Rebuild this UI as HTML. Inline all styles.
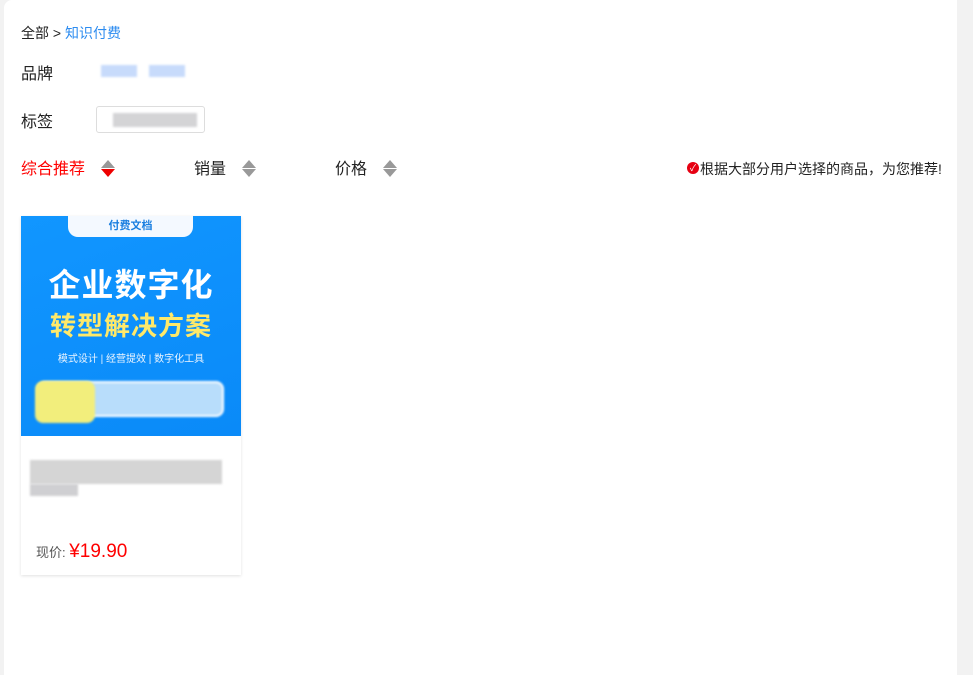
<!DOCTYPE html>
<html><head><meta charset="utf-8"><style>
*{margin:0;padding:0;box-sizing:border-box}
body{width:973px;height:675px;background:#f2f2f2;font-family:"Liberation Sans","Noto Sans CJK SC",sans-serif;overflow:hidden;position:relative}
.panel{position:absolute;left:4px;top:0;width:953px;height:675px;background:#fff;border-radius:8px 0 0 0}
.a{position:absolute;white-space:nowrap}
.blur{position:absolute;filter:blur(1px)}
.tri{position:absolute;width:0;height:0;border-left:7px solid transparent;border-right:7px solid transparent}
</style></head><body>
<div class="panel"></div>
<div class="a" style="left:21px;top:23px;font-size:14px;color:#222">全部 &gt; <span style="color:#2d8cf0">知识付费</span></div>
<div class="a" style="left:21px;top:60px;font-size:16px;color:#222">品牌</div>
<div class="blur" style="left:101px;top:65px;width:36px;height:12px;background:#c7dbfb"></div>
<div class="blur" style="left:149px;top:65px;width:36px;height:12px;background:#c7dbfb"></div>
<div class="a" style="left:21px;top:108px;font-size:16px;color:#222">标签</div>
<div style="position:absolute;left:96px;top:106px;width:109px;height:27px;border:1px solid #ddd;border-radius:3px"></div>
<div class="blur" style="left:113px;top:113px;width:84px;height:14px;background:#d4d4d6"></div>
<div class="a" style="left:21px;top:155px;font-size:16px;color:#f00">综合推荐</div>
<div class="tri" style="left:101px;top:160px;border-bottom:8px solid #999"></div>
<div class="tri" style="left:101px;top:169px;border-top:8px solid #e00"></div>
<div class="a" style="left:194px;top:155px;font-size:16px;color:#222">销量</div>
<div class="tri" style="left:242px;top:160px;border-bottom:8px solid #999"></div>
<div class="tri" style="left:242px;top:169px;border-top:8px solid #999"></div>
<div class="a" style="left:335px;top:155px;font-size:16px;color:#222">价格</div>
<div class="tri" style="left:383px;top:160px;border-bottom:8px solid #999"></div>
<div class="tri" style="left:383px;top:169px;border-top:8px solid #999"></div>
<div style="position:absolute;left:687px;top:162px;width:12px;height:12px;border-radius:6px;background:#e60012;color:#fff;font-size:9px;line-height:12px;text-align:center">✓</div>
<div class="a" style="left:700px;top:159px;font-size:14px;color:#222">根据大部分用户选择的商品，为您推荐!</div>

<div style="position:absolute;left:21px;top:216px;width:220px;height:359px;background:#fff;box-shadow:0 1px 3px rgba(0,0,0,.12)"></div>
<div style="position:absolute;left:21px;top:216px;width:220px;height:220px;background:linear-gradient(160deg,#1196ff,#0a8af8);overflow:hidden">
 <div style="position:absolute;left:47px;top:0;width:125px;height:21px;background:#f4f9ff;border-radius:0 0 10px 10px;text-align:center;font-size:11px;font-weight:bold;color:#1a7fe0;line-height:21px">付费文档</div>
 <div class="a" style="left:0;width:220px;text-align:center;top:44px;font-size:32px;font-weight:bold;color:#fff;letter-spacing:1px">企业数字化</div>
 <div class="a" style="left:0;width:220px;text-align:center;top:90px;font-size:26px;font-weight:bold;color:#ffe96a;letter-spacing:1px">转型解决方案</div>
 <div class="a" style="left:0;width:220px;text-align:center;top:134px;font-size:10px;color:#eaf4ff">模式设计 | 经营提效 | 数字化工具</div>
 <div style="position:absolute;left:16px;top:165px;width:187px;height:36px;border:2px solid #fff;border-radius:8px;background:#b8ddfb;filter:blur(1px)"></div>
 <div style="position:absolute;left:14px;top:165px;width:60px;height:42px;background:#f2ee7c;border-radius:8px;filter:blur(1px)"></div>
</div>
<div class="blur" style="left:30px;top:460px;width:192px;height:24px;background:#d5d5d5"></div>
<div class="blur" style="left:30px;top:484px;width:48px;height:12px;background:#cfcfd2"></div>
<div class="a" style="left:36px;top:541px;font-size:13px;color:#555">现价: <span style="font-size:19px;color:#f00">¥19.90</span></div>
</body></html>
